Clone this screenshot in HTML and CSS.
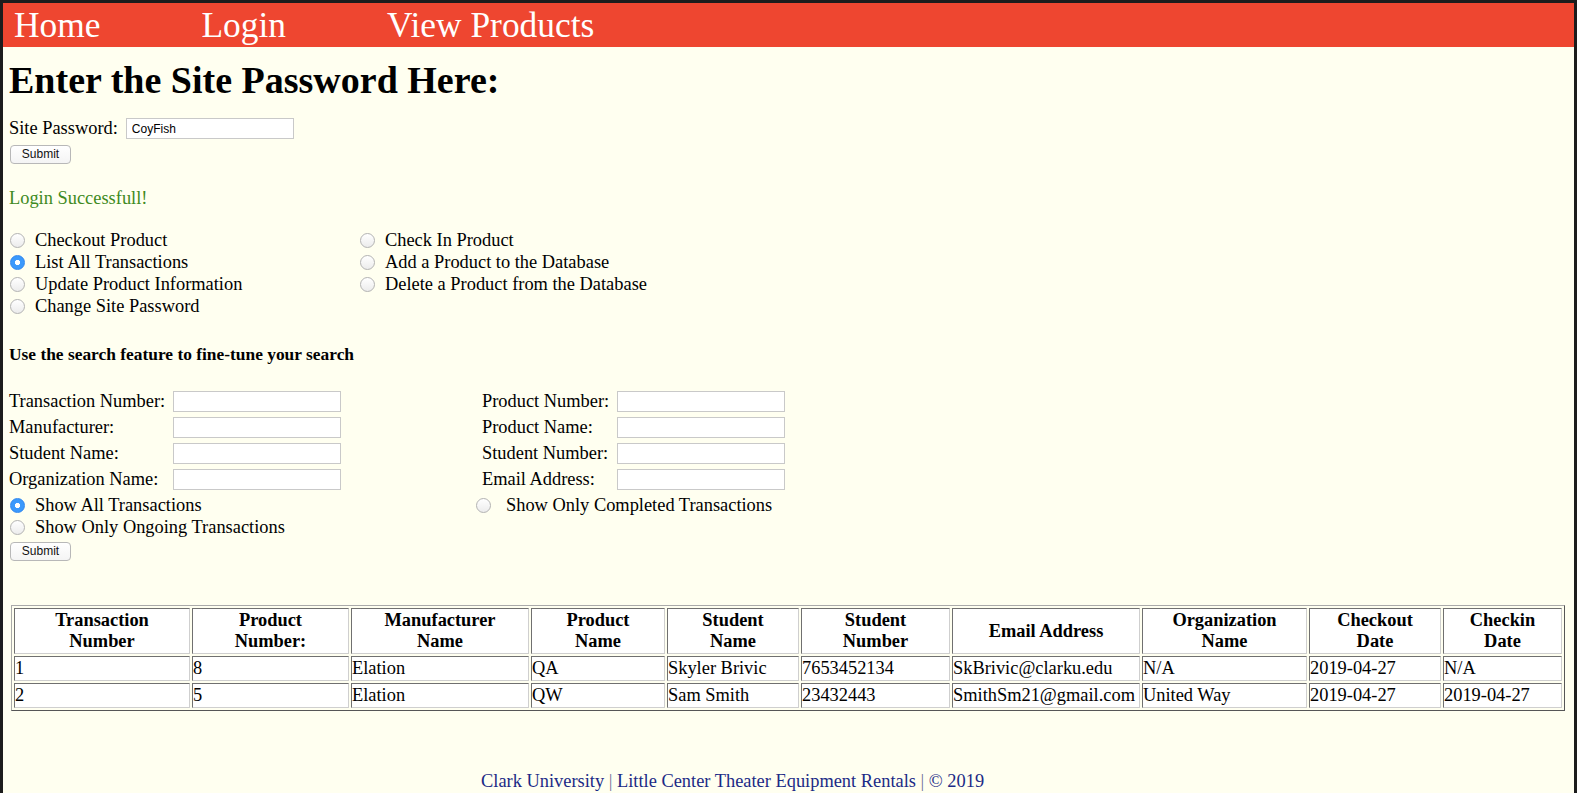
FILE: index.html
```html
<!DOCTYPE html>
<html lang="en">
<head>
<meta charset="utf-8">
<title>Little Center Theater Equipment Rentals</title>
<link rel="stylesheet" href="styles.css">
</head>
<body>
<div class="frame">
  <nav class="topnav">
    <a href="#" class="nav-link">Home</a>
    <a href="#" class="nav-link">Login</a>
    <a href="#" class="nav-link">View Products</a>
  </nav>
  <main class="content">
    <h1 class="title">Enter the Site Password Here:</h1>
    <form class="pw-form">
      <div class="pw-row">
        <label class="pw-label" for="pw">Site Password:</label>
        <input class="text-input pw-input" id="pw" type="text" value="CoyFish">
      </div>
      <button type="button" class="btn">Submit</button>
    </form>
    <p class="success">Login Successfull!</p>

    <div class="actions">
      <div class="action-col action-col-left">
        <label class="radio-row"><input type="radio" name="action" class="radio"><span>Checkout Product</span></label>
        <label class="radio-row"><input type="radio" name="action" class="radio" checked><span>List All Transactions</span></label>
        <label class="radio-row"><input type="radio" name="action" class="radio"><span>Update Product Information</span></label>
        <label class="radio-row"><input type="radio" name="action" class="radio"><span>Change Site Password</span></label>
      </div>
      <div class="action-col">
        <label class="radio-row"><input type="radio" name="action" class="radio"><span>Check In Product</span></label>
        <label class="radio-row"><input type="radio" name="action" class="radio"><span>Add a Product to the Database</span></label>
        <label class="radio-row"><input type="radio" name="action" class="radio"><span>Delete a Product from the Database</span></label>
      </div>
    </div>

    <p class="search-hint">Use the search feature to fine-tune your search</p>

    <form class="search-form">
      <div class="search-grid">
        <label class="s-label">Transaction Number:</label><input class="text-input" type="text">
        <span class="s-gap"></span>
        <label class="s-label">Product Number:</label><input class="text-input" type="text">

        <label class="s-label">Manufacturer:</label><input class="text-input" type="text">
        <span class="s-gap"></span>
        <label class="s-label">Product Name:</label><input class="text-input" type="text">

        <label class="s-label">Student Name:</label><input class="text-input" type="text">
        <span class="s-gap"></span>
        <label class="s-label">Student Number:</label><input class="text-input" type="text">

        <label class="s-label">Organization Name:</label><input class="text-input" type="text">
        <span class="s-gap"></span>
        <label class="s-label">Email Address:</label><input class="text-input" type="text">
      </div>
      <div class="filter-grid">
        <label class="radio-row"><input type="radio" name="filter" class="radio" checked><span>Show All Transactions</span></label>
        <label class="radio-row radio-row-wide"><input type="radio" name="filter" class="radio"><span>Show Only Completed Transactions</span></label>
        <label class="radio-row"><input type="radio" name="filter" class="radio"><span>Show Only Ongoing Transactions</span></label>
      </div>
      <button type="button" class="btn btn-search">Submit</button>
    </form>

    <table class="tx-table">
      <colgroup>
        <col class="c1"><col class="c2"><col class="c3"><col class="c4"><col class="c5">
        <col class="c6"><col class="c7"><col class="c8"><col class="c9"><col class="c10">
      </colgroup>
      <thead>
        <tr>
          <th>Transaction<br>Number</th>
          <th>Product<br>Number:</th>
          <th>Manufacturer<br>Name</th>
          <th>Product<br>Name</th>
          <th>Student<br>Name</th>
          <th>Student<br>Number</th>
          <th>Email Address</th>
          <th>Organization<br>Name</th>
          <th>Checkout<br>Date</th>
          <th>Checkin<br>Date</th>
        </tr>
      </thead>
      <tbody>
        <tr>
          <td>1</td><td>8</td><td>Elation</td><td>QA</td><td>Skyler Brivic</td>
          <td>7653452134</td><td>SkBrivic@clarku.edu</td><td>N/A</td><td>2019-04-27</td><td>N/A</td>
        </tr>
        <tr>
          <td>2</td><td>5</td><td>Elation</td><td>QW</td><td>Sam Smith</td>
          <td>23432443</td><td>SmithSm21@gmail.com</td><td>United Way</td><td>2019-04-27</td><td>2019-04-27</td>
        </tr>
      </tbody>
    </table>

    <footer class="footer">
      Clark University <span class="sep">|</span> Little Center Theater Equipment Rentals <span class="sep">|</span> © 2019
    </footer>
  </main>
</div>
</body>
</html>
```

FILE: styles.css
```css
* { box-sizing: border-box; }

html, body {
  margin: 0;
  padding: 0;
  background: #fffff0;
}

body {
  font-family: "Liberation Serif", "Times New Roman", serif;
  font-size: 18.4px;
  color: #000;
}

.frame {
  width: 1577px;
  height: 793px;
  border: 3px solid #1c1c1c;
  border-bottom: none;
  background: #fffff0;
  overflow: hidden;
}

.topnav {
  height: 44px;
  background: #ee4630;
  display: flex;
  align-items: center;
  gap: 101px;
  padding-left: 11px;
}

.nav-link {
  color: #fff;
  text-decoration: none;
  font-size: 35.4px;
  line-height: 40px;
}

.content {
  padding: 0 6px;
}

.title {
  margin: 12px 0 0;
  font-size: 38px;
  line-height: 42px;
  font-weight: bold;
}

.pw-form {
  margin-top: 17px;
}

.pw-row {
  display: flex;
  align-items: center;
  height: 21px;
}

.pw-label {
  margin-right: 8px;
  line-height: 21px;
}

.text-input {
  width: 168px;
  height: 21px;
  border: 1px solid #c9c9c9;
  background: #fff;
  font-family: "Liberation Sans", Arial, sans-serif;
  font-size: 12px;
  padding: 1px 5px;
  margin: 0;
  outline: none;
}

.btn {
  display: block;
  margin: 6px 0 0 1px;
  width: 61px;
  height: 19px;
  padding: 0;
  border: 1px solid #b8b8b8;
  border-radius: 4px;
  background: linear-gradient(#ffffff, #f4f4f4);
  font-family: "Liberation Sans", Arial, sans-serif;
  font-size: 12px;
  line-height: 17px;
  color: #111;
}

.success {
  margin: 24px 0 0;
  color: #3e8a22;
  line-height: 21px;
}

.actions {
  margin-top: 20px;
  display: flex;
}

.action-col {
  display: flex;
  flex-direction: column;
}

.action-col-left {
  width: 350px;
}

.radio-row {
  display: flex;
  align-items: center;
  height: 22px;
  line-height: 22px;
  white-space: nowrap;
}

.radio {
  -webkit-appearance: none;
  appearance: none;
  width: 15px;
  height: 15px;
  margin: 0 10px 0 1px;
  border: 1px solid #b3b3b3;
  border-radius: 50%;
  background: linear-gradient(#ffffff, #ececec);
  flex: none;
}

.radio:checked {
  border-color: #2f86ee;
  background: radial-gradient(circle, #ffffff 0 2.3px, #3b99fc 2.9px);
}

.search-hint {
  margin: 28px 0 0;
  font-weight: bold;
  font-size: 17.4px;
  line-height: 18px;
}

.search-form {
  margin-top: 28px;
}

.search-grid {
  display: grid;
  grid-template-columns: 164px 168px 141px 135px 168px;
  grid-auto-rows: 21px;
  row-gap: 5px;
  align-items: center;
}

.s-label {
  line-height: 21px;
  white-space: nowrap;
}

.filter-grid {
  margin-top: 4px;
  display: grid;
  grid-template-columns: 466px auto;
}

.radio-row-wide .radio {
  margin-right: 15px;
}

.btn-search {
  margin-top: 4px;
}

.tx-table {
  margin: 44px 0 0 2px;
  width: 1554px;
  table-layout: fixed;
  border: 1px outset #aaa;
  border-spacing: 2px;
  background: #fffff0;
}

.c1 { width: 176px; }
.c2 { width: 157px; }
.c3 { width: 178px; }
.c4 { width: 134px; }
.c5 { width: 132px; }
.c6 { width: 149px; }
.c7 { width: 188px; }
.c8 { width: 165px; }
.c9 { width: 132px; }
.c10 { width: 119px; }

.tx-table th,
.tx-table td {
  background: #fff;
  border: 1px solid;
  border-color: #707070 #cfcfcf #cfcfcf #707070;
  padding: 1px 0;
  line-height: 21px;
  font-size: 18.4px;
  white-space: nowrap;
  overflow: hidden;
}

.tx-table th {
  font-weight: bold;
  text-align: center;
}

.tx-table td {
  text-align: left;
}

.footer {
  margin-top: 60px;
  padding-left: 472px;
  color: #1b2a86;
  line-height: 20px;
}

.sep {
  color: #6f6f9a;
}
```
